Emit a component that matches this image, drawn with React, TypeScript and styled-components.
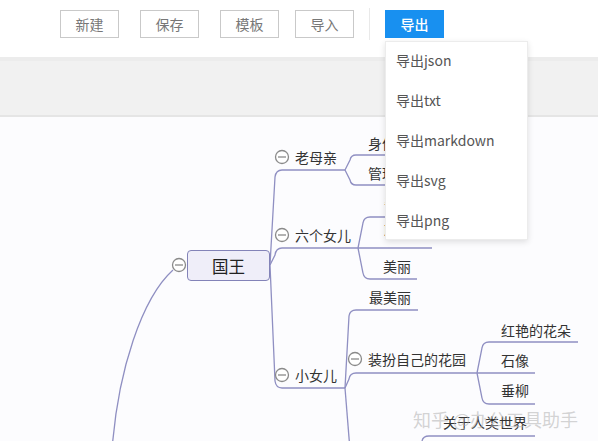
import React from "react";
import styled, { createGlobalStyle } from "styled-components";

const GlobalStyle = createGlobalStyle`
  html, body { margin: 0; padding: 0; background: #ffffff; }
  body { font-family: "Noto Sans CJK SC", "Noto Sans", sans-serif; }
  * { box-sizing: border-box; }
`;

const CANVAS_TOP = 117;
const LINE = "#8f8fc2";

const Page = styled.div`
  width: 598px;
  height: 441px;
  display: flex;
  flex-direction: column;
  overflow: hidden;
  position: relative;
`;

const Toolbar = styled.div`
  height: 57px;
  flex: none;
  display: flex;
  align-items: flex-start;
  padding: 10px 0 0 60px;
  background: #ffffff;
`;

const ToolButton = styled.button<{ $ml: number; $primary?: boolean }>`
  width: 59px;
  height: 28px;
  margin-left: ${(p) => p.$ml}px;
  border: 1px solid ${(p) => (p.$primary ? "#1890f0" : "#c9c9c9")};
  background: ${(p) => (p.$primary ? "#1890f0" : "#ffffff")};
  color: ${(p) => (p.$primary ? "#ffffff" : "#777777")};
  font-family: "Noto Sans CJK SC", sans-serif;
  font-size: 14px;
  font-weight: ${(p) => (p.$primary ? 500 : 400)};
  padding: 0;
  line-height: 26px;
  border-radius: 0;
`;

const Divider = styled.div`
  width: 1px;
  height: 32px;
  margin: -2px 0 0 15px;
  background: #e9e9e9;
`;

const ExportWrap = styled.div`
  position: relative;
  margin-left: 15px;
  display: flex;
`;

const Dropdown = styled.ul`
  position: absolute;
  top: 31px;
  left: 0;
  width: 143px;
  height: 199px;
  margin: 0;
  padding: 0;
  list-style: none;
  background: #ffffff;
  border: 1px solid #ececec;
  box-shadow: 0 2px 6px rgba(0, 0, 0, 0.12);
  z-index: 10;
`;

const MenuItem = styled.li`
  height: 40px;
  line-height: 36px;
  padding: 0 0 4px 10px;
  font-size: 14px;
  color: #555555;
  white-space: nowrap;
`;

const Band = styled.div`
  height: 60px;
  flex: none;
  background: #f1f1f1;
  border-top: 4px solid #ececec;
  border-bottom: 2px solid #e5e5e5;
`;

const Canvas = styled.div`
  flex: 1;
  position: relative;
  background: #fcfcfe;
  overflow: hidden;
`;

const Lines = styled.svg`
  position: absolute;
  left: 0;
  top: 0;
  width: 598px;
  height: 324px;
`;

const Label = styled.div<{ $x: number; $y: number }>`
  position: absolute;
  left: ${(p) => p.$x}px;
  top: ${(p) => p.$y - CANVAS_TOP - 10}px;
  height: 20px;
  line-height: 20px;
  font-size: 14px;
  color: #333333;
  white-space: nowrap;
`;

const RootNode = styled.div`
  position: absolute;
  left: 187px;
  top: ${250 - CANVAS_TOP}px;
  width: 83px;
  height: 31px;
  border: 1px solid #8383b8;
  border-radius: 4px;
  background: #efeef9;
  display: flex;
  align-items: center;
  justify-content: center;
  font-size: 16.5px;
  color: #222222;
`;

const Watermark = styled.div`
  position: absolute;
  left: 413px;
  top: ${406 - CANVAS_TOP}px;
  font-size: 18px;
  line-height: 26px;
  color: rgba(175, 175, 175, 0.55);
  white-space: nowrap;
`;

type Node = { text: string; x: number; y: number };

const nodes: Node[] = [
  { text: "老母亲", x: 295, y: 157 },
  { text: "身份", x: 368, y: 143 },
  { text: "管理", x: 368, y: 173 },
  { text: "六个女儿", x: 295, y: 235 },
  { text: "善良", x: 384, y: 202 },
  { text: "聪明", x: 384, y: 230 },
  { text: "美丽", x: 383, y: 266 },
  { text: "小女儿", x: 295, y: 375 },
  { text: "最美丽", x: 369, y: 297 },
  { text: "装扮自己的花园", x: 368, y: 359 },
  { text: "红艳的花朵", x: 501, y: 330 },
  { text: "石像", x: 501, y: 360 },
  { text: "垂柳", x: 501, y: 390 },
  { text: "关于人类世界", x: 443, y: 422 },
];

const T = CANVAS_TOP;
const y = (v: number) => v - T;

const paths: string[] = [
  `M270 ${y(265)} L275 ${y(177)} Q276 ${y(170)} 282 ${y(170)} L345 ${y(170)}`,
  `M270 ${y(265)} L275 ${y(255)} Q276 ${y(248)} 282 ${y(248)} L358 ${y(248)}`,
  `M270 ${y(265)} L275 ${y(381)} Q276 ${y(388)} 282 ${y(388)} L345 ${y(388)}`,
  `M345 ${y(170)} L350 ${y(160)} Q351 ${y(155)} 356 ${y(155)} L420 ${y(155)}`,
  `M345 ${y(170)} L350 ${y(180)} Q351 ${y(185)} 356 ${y(185)} L420 ${y(185)}`,
  `M358 ${y(248)} L363 ${y(223)} Q364 ${y(217)} 370 ${y(217)} L430 ${y(217)}`,
  `M358 ${y(248)} L432 ${y(248)}`,
  `M358 ${y(248)} L363 ${y(273)} Q364 ${y(279)} 370 ${y(279)} L417 ${y(279)}`,
  `M345 ${y(388)} L349 ${y(316)} Q350 ${y(310)} 356 ${y(310)} L418 ${y(310)}`,
  `M345 ${y(388)} L349 ${y(379)} Q350 ${y(373)} 356 ${y(373)} L477 ${y(373)}`,
  `M345 ${y(388)} L350 ${y(450)}`,
  `M477 ${y(373)} L482 ${y(348)} Q483 ${y(342)} 489 ${y(342)} L578 ${y(342)}`,
  `M477 ${y(373)} L535 ${y(373)}`,
  `M477 ${y(373)} L482 ${y(398)} Q483 ${y(404)} 489 ${y(404)} L535 ${y(404)}`,
  `M419 ${y(448)} L422 ${y(441)} Q423 ${y(436)} 429 ${y(436)} L535 ${y(436)}`,
  `M173 ${y(270)} C142 ${y(298)} 118 ${y(370)} 112 ${y(450)}`,
];

const toggles: Array<[number, number]> = [
  [282, 157],
  [282, 235],
  [282, 375],
  [355, 359],
  [179, 265],
];

const menu = ["导出json", "导出txt", "导出markdown", "导出svg", "导出png"];

export default function App() {
  return (
    <>
      <GlobalStyle />
      <Page>
        <Toolbar>
          <ToolButton $ml={0}>新建</ToolButton>
          <ToolButton $ml={21}>保存</ToolButton>
          <ToolButton $ml={21}>模板</ToolButton>
          <ToolButton $ml={16}>导入</ToolButton>
          <Divider />
          <ExportWrap>
            <ToolButton $ml={0} $primary>
              导出
            </ToolButton>
            <Dropdown>
              {menu.map((m) => (
                <MenuItem key={m}>{m}</MenuItem>
              ))}
            </Dropdown>
          </ExportWrap>
        </Toolbar>
        <Band />
        <Canvas>
          <Lines viewBox="0 0 598 324">
            {paths.map((d, i) => (
              <path key={i} d={d} fill="none" stroke={LINE} strokeWidth={1.3} />
            ))}
            {toggles.map(([cx, cy], i) => (
              <g key={i}>
                <circle cx={cx} cy={y(cy)} r={6.5} fill="#ffffff" stroke="#8a8a8a" strokeWidth={1.3} />
                <line x1={cx - 4} y1={y(cy)} x2={cx + 4} y2={y(cy)} stroke="#8a8a8a" strokeWidth={1.3} />
              </g>
            ))}
          </Lines>
          <RootNode>国王</RootNode>
          {nodes.map((n) => (
            <Label key={n.text} $x={n.x} $y={n.y}>
              {n.text}
            </Label>
          ))}
          <Watermark>知乎 @办公工具助手</Watermark>
        </Canvas>
      </Page>
    </>
  );
}
